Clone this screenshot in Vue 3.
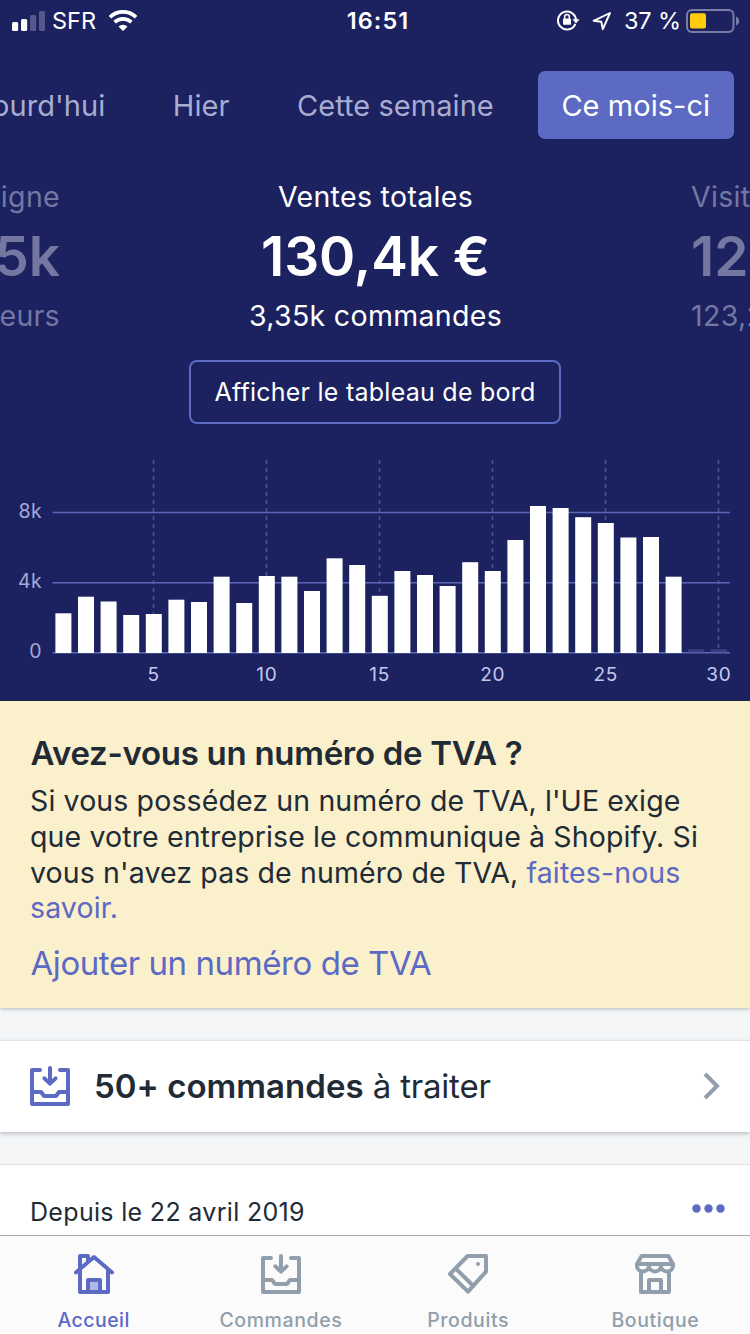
<script setup>
const periods = [
  { label: "Aujourd'hui" },
  { label: 'Hier' },
  { label: 'Cette semaine' },
  { label: 'Ce mois-ci', active: true },
]

const baseline = 653
const band = 22.6
const tops = [
  613.3, 596.7, 601.5, 615, 614, 599.7, 602, 576.7, 603, 576, 576.7, 591, 558.3, 565, 595.8,
  571, 575, 586, 562.2, 571, 540, 506, 508, 517.2, 523, 537.5, 537, 576.7,
]
const bars = tops.map((y, i) => ({ x: 55.4 + i * band, y, h: baseline - y }))
const emptyBars = [28, 29].map((i) => 55.4 + i * band)
const yTicks = [
  { label: '8k', y: 512.6 },
  { label: '4k', y: 582.8 },
  { label: '0', y: 652.8 },
]
const xTicks = [5, 10, 15, 20, 25, 30].map((day) => ({
  day,
  x: 63.1 + (day - 1) * band,
  end: tops[day - 1] ?? 652,
}))
</script>

<template>
  <div class="screen">
    <section class="overview">
      <header class="status">
        <div class="status-left">
          <svg class="signal" width="33" height="20" viewBox="0 0 33 20">
            <rect x="0" y="11" width="6.2" height="9" rx="1.6" fill="#fff" />
            <rect x="9" y="8" width="6.2" height="12" rx="1.6" fill="#fff" />
            <rect x="18" y="4" width="6.2" height="16" rx="1.6" fill="#54588a" />
            <rect x="27" y="0" width="6" height="20" rx="1.6" fill="#54588a" />
          </svg>
          <span class="carrier">SFR</span>
          <svg class="wifi" width="28" height="21" viewBox="-14 -21 28 21" fill="none" stroke="#fff" stroke-width="3.8">
            <path d="M-13.1-13.8A19 19 0 0 1 13.1-13.8" />
            <path d="M-8.4-8.9A12.3 12.3 0 0 1 8.4-8.9" />
            <path d="M-4.5-4.5A6.4 6.4 0 0 1 4.5-4.5L.6-.6Q0-.1-.6-.6Z" fill="#fff" stroke="none" />
          </svg>
        </div>
        <span class="time">16:51</span>
        <div class="status-right">
          <svg class="lock" width="24" height="22" viewBox="0 0 24 22">
            <path d="M19.4 14.8A9 9 0 1 1 20 11" fill="none" stroke="#fff" stroke-width="2" />
            <path d="M16.4 10.2h7.2L20 14.6z" fill="#fff" />
            <rect x="7" y="9.5" width="8" height="6.3" rx=".8" fill="#fff" />
            <path d="M8.7 10V7.700a2.300 2.300 0 0 1 4.600 0V10" fill="none" stroke="#fff" stroke-width="1.500" />
          </svg>
          <svg class="arrow" width="20" height="20" viewBox="0 0 20 20" fill="none" stroke="#fff" stroke-width="1.9" stroke-linejoin="round">
            <path d="M18 2 1.600 9.800 9.300 10.700 10.800 18.200Z" />
          </svg>
          <span class="percent">37 %</span>
          <svg class="battery" width="54" height="24" viewBox="0 0 54 24">
            <rect x="1" y="1" width="46.500" height="22" rx="5" fill="none" stroke="#797ca5" stroke-width="2" />
            <rect x="4" y="4.200" width="16" height="15.300" rx="2" fill="#ffcb0a" />
            <path d="M50 7.500q3.200 1.500 3.200 4.500t-3.200 4.500z" fill="#797ca5" />
          </svg>
        </div>
      </header>

      <nav class="periods">
        <button v-for="p in periods" :key="p.label" class="period" :class="{ active: p.active }">{{ p.label }}</button>
      </nav>

      <div class="metrics">
        <div class="metric side prev">
          <p class="name">igne</p>
          <p class="value">5k</p>
          <p class="detail">eurs</p>
        </div>
        <div class="metric">
          <p class="name">Ventes totales</p>
          <p class="value">130,4k €</p>
          <p class="detail">3,35k commandes</p>
        </div>
        <div class="metric side next">
          <p class="name">Visit</p>
          <p class="value">12</p>
          <p class="detail">123,2</p>
        </div>
      </div>

      <button class="dashboard">Afficher le tableau de bord</button>

      <svg class="chart" width="750" height="277" viewBox="0 424 750 277">
        <g stroke="#50559a" stroke-width="1.400" stroke-dasharray="4 4">
          <line v-for="t in xTicks" :key="t.day" :x1="t.x" :x2="t.x" y1="460" :y2="t.end" />
        </g>
        <g stroke="#5c66b8" stroke-width="1.500">
          <line v-for="t in yTicks" :key="t.label" x1="52.500" x2="730" :y1="t.y" :y2="t.y" />
        </g>
        <rect v-for="x in emptyBars" :key="x" :x="x" y="649.300" width="16" height="3" fill="#3a3f7e" />
        <rect v-for="b in bars" :key="b.x" :x="b.x" :y="b.y" width="16" :height="b.h" fill="#fff" />
        <text v-for="t in yTicks" :key="t.label" class="y-label" x="42" :y="t.y + 5.200" text-anchor="end">{{ t.label }}</text>
        <text v-for="t in xTicks" :key="t.day" class="x-label" :x="t.x + 0.300" y="681" text-anchor="middle">{{ t.day }}</text>
      </svg>
    </section>

    <section class="banner">
      <h2>Avez-vous un numéro de TVA ?</h2>
      <p>
        Si vous possédez un numéro de TVA, l'UE exige<br />
        que votre entreprise le communique à Shopify. Si<br />
        vous n'avez pas de numéro de TVA, <a>faites-nous<br />savoir.</a>
      </p>
      <a class="action">Ajouter un numéro de TVA</a>
    </section>

    <section class="card orders">
      <svg width="40" height="40" viewBox="0 0 20 20" fill="none" stroke="#5c6ac4" stroke-width="2" stroke-linecap="round" stroke-linejoin="round">
        <path d="M5 2H1V19H19V2H15M10 1V8.500M7.200 6.200 10 8.800 12.800 6.200M1 13H5.500L7 15H13L14.500 13H19" />
      </svg>
      <span class="orders-text"><strong>50+ commandes</strong> à traiter</span>
      <svg class="chevron" width="18" height="28" viewBox="0 0 18 28" fill="none" stroke="#919eab" stroke-width="4">
        <path d="M2 2 14 14 2 26" />
      </svg>
    </section>

    <section class="card since">
      <span>Depuis le 22 avril 2019</span>
      <svg width="33" height="9" viewBox="0 0 33 9" fill="#5c6ac4">
        <circle cx="4.500" cy="4.500" r="4.200" />
        <circle cx="16.500" cy="4.500" r="4.200" />
        <circle cx="28.500" cy="4.500" r="4.200" />
      </svg>
    </section>

    <nav class="tabbar">
      <a class="tab current">
        <svg viewBox="0 0 20 20">
          <path d="M7 13H13V19H7Z" fill="#b3b9e6" />
          <path d="M1 9.200 10 1.500 19 9.200M3 8V19H17V8M3 8V1H7V3.500" />
        </svg>
        <span>Accueil</span>
      </a>
      <a class="tab">
        <svg viewBox="0 0 20 20">
          <path d="M5 2H1V19H19V2H15M10 1V8.500M7.200 6.200 10 8.800 12.800 6.200M1 13H5.500L7 15H13L14.500 13H19" />
        </svg>
        <span>Commandes</span>
      </a>
      <a class="tab">
        <svg viewBox="0 0 20 20">
          <path d="M9.800 1H19V8.800L10 18.800 1 10ZM3.900 7.300 12.700 16" />
          <circle class="dot" cx="15" cy="5" r="1" />
        </svg>
        <span>Produits</span>
      </a>
      <a class="tab">
        <svg viewBox="0 0 20 20">
          <path d="M3.300 1H16.700L19 5V6A3 2.700 0 0 1 13 6A3 2.700 0 0 1 7 6A3 2.700 0 0 1 1 6V5ZM1.500 5H18.500M3 9V19H17V9M7 19V13H13V19" />
        </svg>
        <span>Boutique</span>
      </a>
    </nav>
  </div>
</template>

<style>
body {
  background: #f4f6f8;
}
</style>

<style scoped>
.screen {
  display: flex;
  flex-direction: column;
  width: 750px;
  height: 1334px;
  overflow: hidden;
  background: #f4f6f8;
  color: #212b36;
  font-family: Inter, "Liberation Sans", sans-serif;
}
p,
h2 {
  margin: 0;
}
button {
  font-family: inherit;
  background: none;
  border: 0;
}
svg {
  display: block;
  flex: none;
}

.overview {
  flex: none;
  height: 701px;
  background: #1c2260;
  box-shadow: inset 0 -1px #25264a;
  color: #fff;
}
.status {
  display: grid;
  grid-template-columns: 1fr auto 1fr;
  align-items: center;
  height: 41px;
  font-size: 23.5px;
}
.status-left,
.status-right {
  display: flex;
  align-items: center;
}
.status-left {
  padding-left: 12px;
}
.carrier {
  margin-left: 7px;
}
.wifi {
  margin-left: 13px;
}
.time {
  margin-left: 6px;
  font-weight: 600;
  letter-spacing: 1.1px;
}
.status-right {
  justify-content: flex-end;
  padding-right: 10px;
}
.lock {
  position: relative;
  top: -1px;
}
.arrow {
  margin-left: 12px;
}
.percent {
  margin: 0 5px 0 12px;
  letter-spacing: -0.1px;
  white-space: nowrap;
}

.periods {
  display: flex;
  justify-content: flex-end;
  gap: 20px;
  padding: 30px 16px 0 0;
  overflow: hidden;
}
.period {
  flex: none;
  height: 68px;
  padding: 0 23.8px;
  border-radius: 7px;
  color: #a9acd1;
  font-size: 29px;
  letter-spacing: 0.05px;
  white-space: nowrap;
}
.period.active {
  background: #5c6ac4;
  color: #fff;
}

.metrics {
  display: grid;
  grid-template-columns: 60px 1fr 59px;
  margin-top: 38px;
}
.metric {
  display: flex;
  flex-direction: column;
  align-items: center;
  min-width: 0;
  overflow: hidden;
  white-space: nowrap;
}
.side {
  color: #7377a2;
}
.prev {
  align-items: flex-end;
}
.next {
  align-items: flex-start;
}
.name,
.detail {
  font-size: 28.5px;
  line-height: 40px;
  letter-spacing: 0.33px;
}
.value {
  margin: 9px 0 10px;
  font-size: 55px;
  font-weight: 600;
  line-height: 60px;
  letter-spacing: -0.1px;
}
.dashboard {
  display: block;
  width: 372px;
  height: 64px;
  margin: 24px auto 0;
  padding: 0;
  border: 2px solid #5c6ac4;
  border-radius: 8px;
  color: #fff;
  font-size: 25px;
  letter-spacing: 0.25px;
}
.chart text {
  font-family: Inter, "Liberation Sans", sans-serif;
}
.y-label {
  fill: #a5a9d8;
  font-size: 19.5px;
  letter-spacing: 0.4px;
}
.x-label {
  fill: #c3c8ee;
  font-size: 19px;
  letter-spacing: 0.8px;
}

.banner {
  flex: none;
  box-sizing: border-box;
  height: 307px;
  padding: 32px 30px 0;
  background: #fbf0cc;
  box-shadow: 0 1px 4px rgba(33, 43, 54, 0.3);
}
.banner h2 {
  margin-left: 0.5px;
  font-size: 33px;
  font-weight: 600;
  line-height: 40px;
  letter-spacing: -0.29px;
}
.banner p {
  margin-top: 10px;
  font-size: 28.5px;
  line-height: 35.8px;
  letter-spacing: 0.12px;
  white-space: nowrap;
}
.banner a {
  color: #5c6ac4;
}
.banner .action {
  display: block;
  margin: 16.8px 0 0 0.5px;
  font-size: 33px;
  line-height: 40px;
  letter-spacing: -0.43px;
}

.card {
  flex: none;
  display: flex;
  align-items: center;
  box-sizing: border-box;
  margin-top: 32px;
  border-top: 1px solid #dfe3e8;
  background: #fff;
}
.orders {
  height: 92px;
  padding: 0 29px 2px 30px;
  box-shadow: 0 2px 4px rgba(33, 43, 54, 0.25);
}
.orders-text {
  margin-left: 24px;
  font-size: 33px;
  letter-spacing: -0.2px;
}
.orders-text strong {
  font-weight: 600;
  letter-spacing: 0.04px;
}
.chevron {
  margin-left: auto;
}
.since {
  align-items: flex-start;
  justify-content: space-between;
  height: 90px;
  padding: 31px 25px 0 30px;
  font-size: 25px;
  line-height: 32px;
  letter-spacing: 0.32px;
}
.since svg {
  margin-top: 8px;
}

.tabbar {
  display: grid;
  grid-template-columns: repeat(4, 1fr);
  flex: none;
  box-sizing: border-box;
  height: 99px;
  margin-top: -19px;
  padding: 18px 1px 0 0;
  border-top: 1px solid #a9acb0;
  background: #fbfbfb;
  z-index: 1;
}
.tab {
  display: flex;
  flex-direction: column;
  align-items: center;
  gap: 14px;
  color: #919eab;
  font-size: 19.5px;
  font-weight: 500;
  line-height: 24px;
  letter-spacing: 0.6px;
}
.tab svg {
  width: 40px;
  height: 40px;
  fill: none;
  stroke: currentColor;
  stroke-width: 2;
  stroke-linecap: round;
  stroke-linejoin: round;
}
.tab .dot {
  fill: currentColor;
  stroke: none;
}
.current {
  color: #5c6ac4;
  letter-spacing: 0.45px;
}
</style>
